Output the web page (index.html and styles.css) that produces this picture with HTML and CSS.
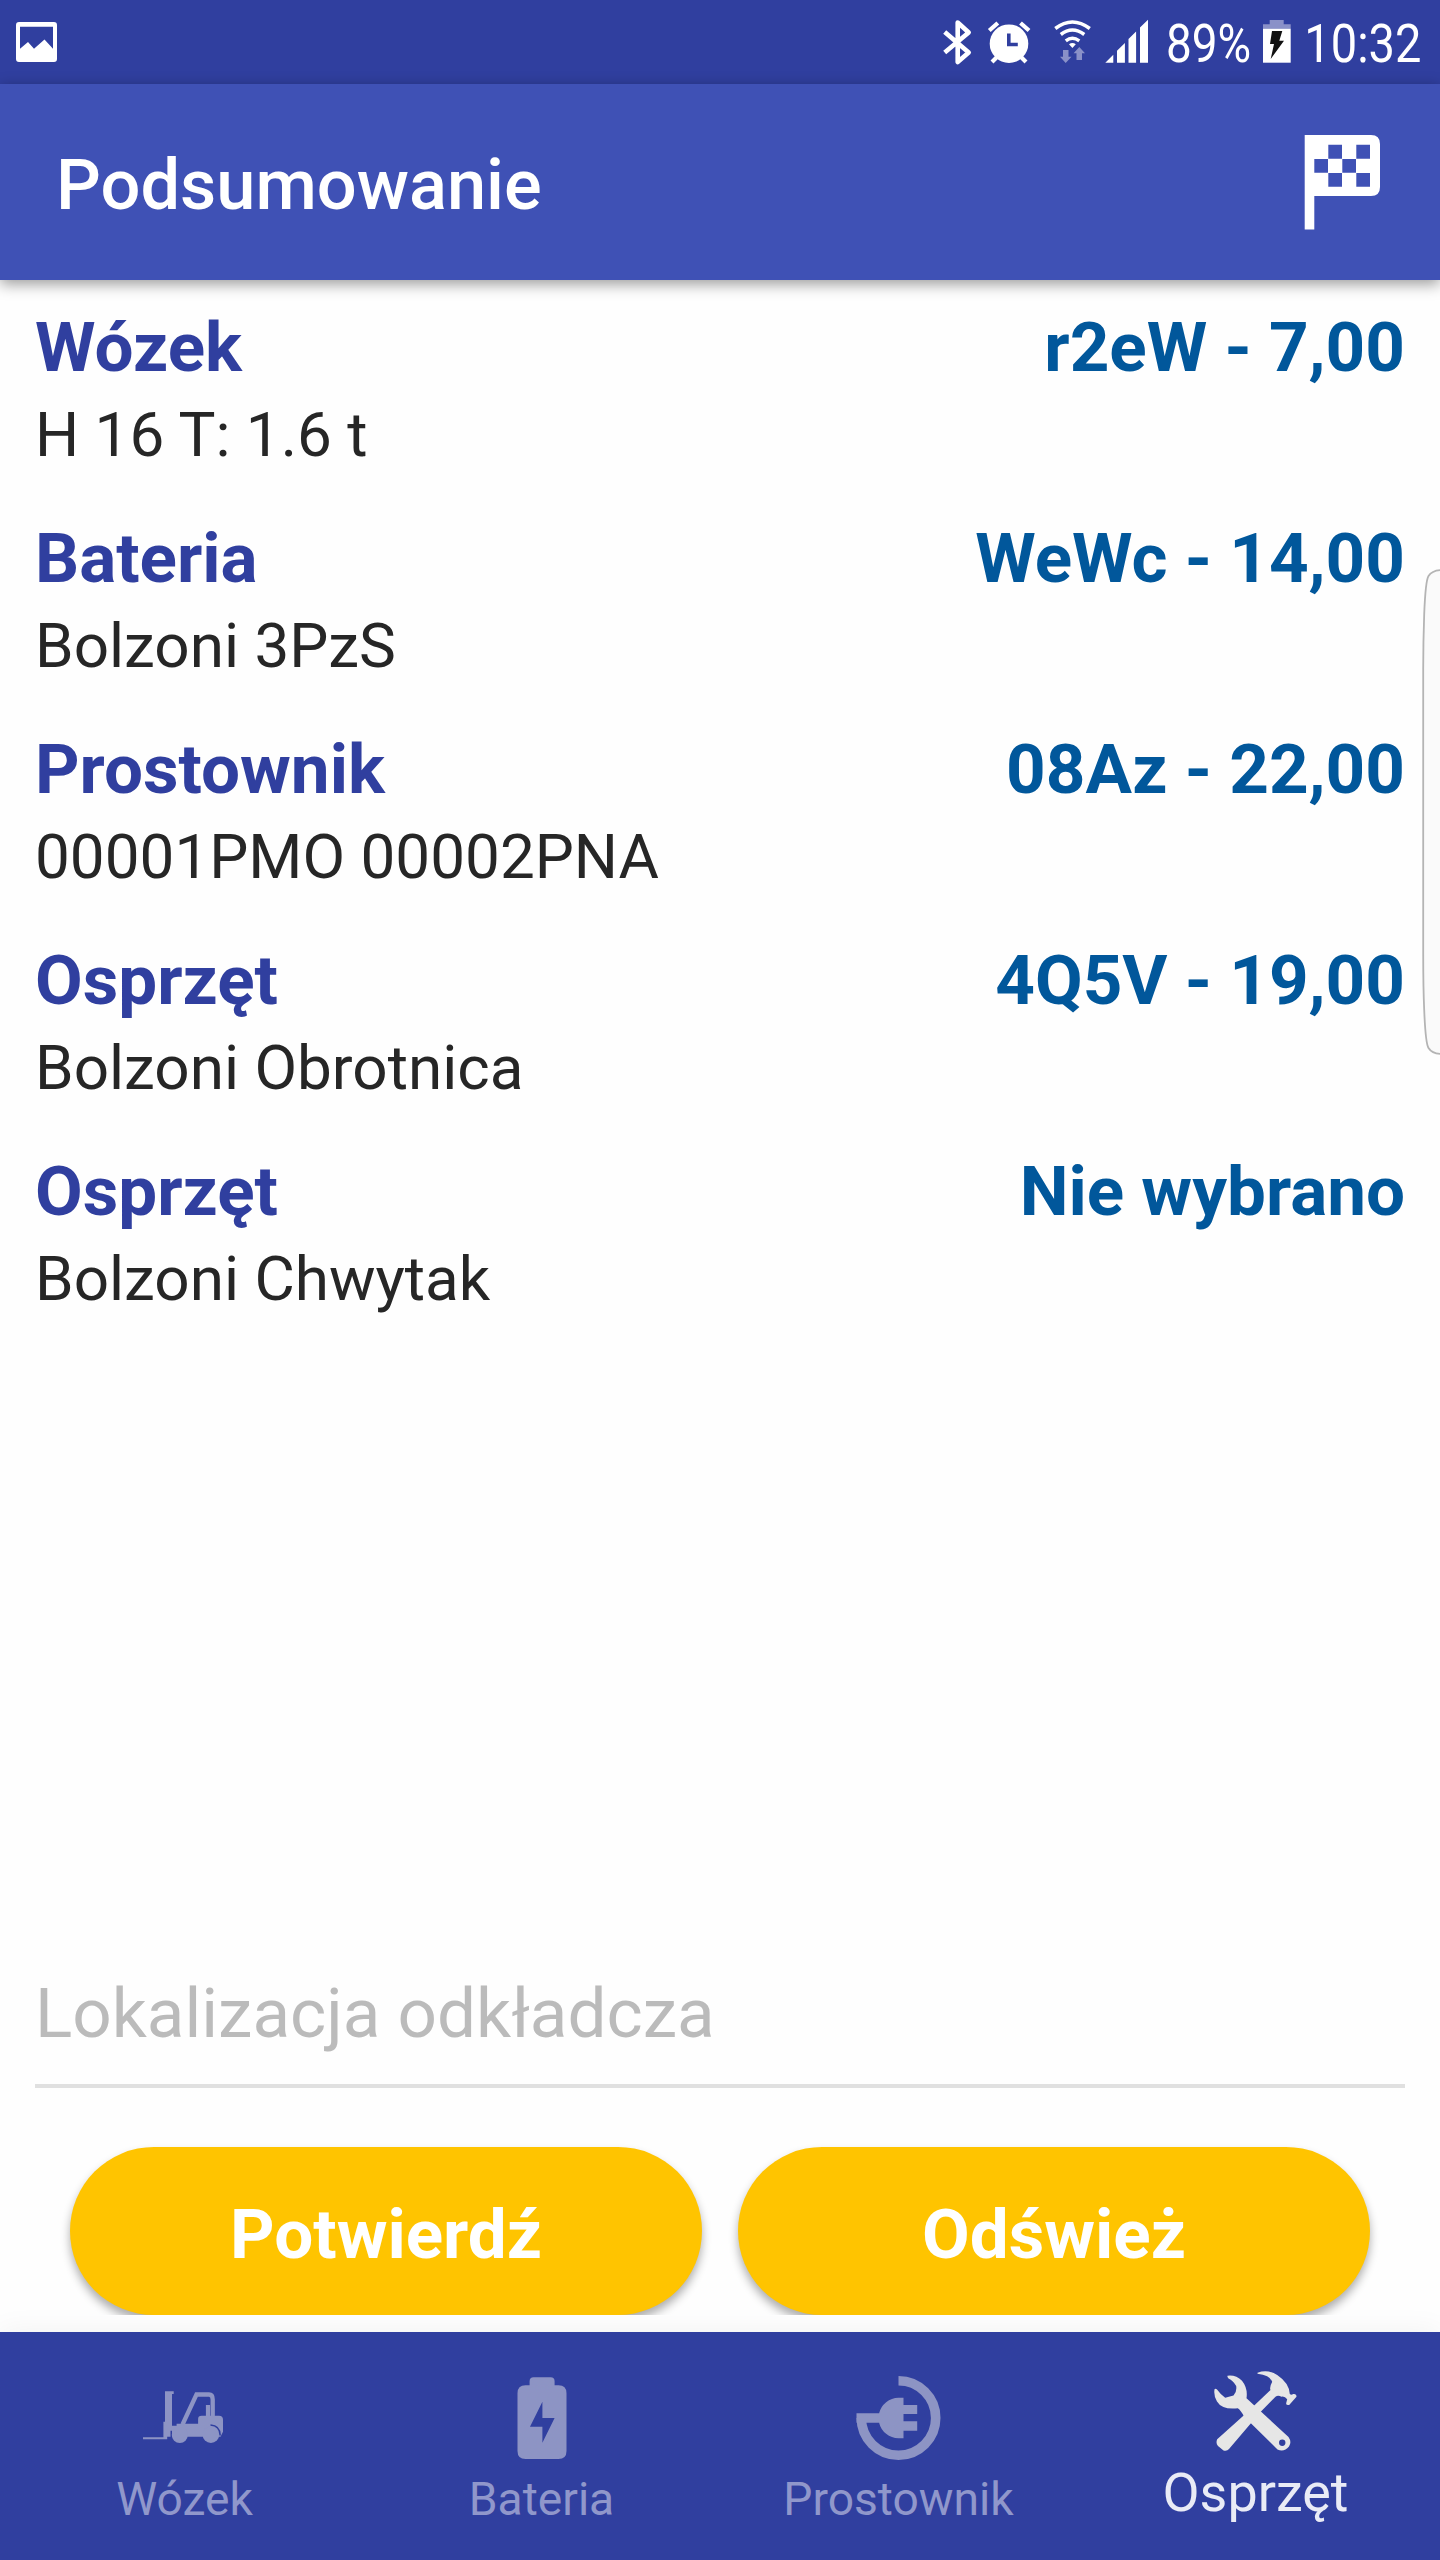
FILE: index.html
```html
<!DOCTYPE html>
<html lang="pl">
<head>
  <meta charset="UTF-8">
  <title>Podsumowanie</title>
  <link rel="stylesheet" href="styles.css">
</head>
<body>

<div class="status-bar">
  <svg class="status-photo" width="44" height="84" viewBox="0 0 44 84">
    <path fill="#fff" fill-rule="evenodd" d="M3 22h35q3 0 3 3v34q0 3-3 3H3q-3 0-3-3V25q0-3 3-3zM4 26.700v22l8-6.700 6 6.700 10.500-9.200 8.500 9.200v-22z"/>
  </svg>
  <div class="status-right">
    <!-- bluetooth -->
    <svg width="40" height="84" viewBox="0 0 40 84">
      <path fill="none" stroke="#fff" stroke-width="4.600" stroke-linejoin="round" d="M4.700 32l24 20.500L17.700 62V22.500l11 10L4.700 52.500"/>
    </svg>
    <!-- alarm -->
    <svg width="60" height="84" viewBox="0 0 60 84">
      <circle cx="29" cy="43.700" r="19.300" fill="#fff"/>
      <path fill="none" stroke="#fff" stroke-width="4.200" d="M9.300 30.500l8.500-7.500M40.500 23l8.500 7.500M12 62l6-6M46 62l-6-6"/>
      <path fill="none" stroke="#303f9f" stroke-width="3.600" d="M28.800 33.500v11h9"/>
    </svg>
    <!-- wifi -->
    <svg width="60" height="84" viewBox="0 0 60 84">
      <path fill="none" stroke="#fff" stroke-width="3.500" d="M15.300 28.500q17-13 34.500 0M20.800 34.500q11.500-9 23.500 0M25.800 40.800q6.500-5 13.500 0"/>
      <path fill="#fff" d="M29 44.200q3.300-2.600 6.800 0L32.400 48z"/>
      <path fill="#8a91c8" d="M23 50h5.500v6.700H31.500L25.700 63 20 56.700h3zM36.500 60H42v-6.700h3L39.300 47l-5.700 6.300h2.900z"/>
    </svg>
    <!-- signal -->
    <svg width="60" height="84" viewBox="0 0 60 84">
      <path fill="#fff" d="M5.300 62.700h8v-8zM17 62.700v-12l7.900-7.700v19.700zM28.500 62.700V39l7.600-7.500v31.200zM40 62.700V27.500l8-7.800v43z"/>
    </svg>
    <span class="status-text percent">89%</span>
    <!-- battery -->
    <svg width="44" height="84" viewBox="0 0 44 84">
      <path fill="#8a91c8" d="M13.700 20h14v4.300h7v4.500H7v-4.500h6.700z"/>
      <path fill="#fff" d="M7 28.700h27.700v34H7z"/>
      <path fill="#111" d="M16 31h10.300l-3 9.700H28L14.700 59 18 44h-4z"/>
    </svg>
    <span class="status-text time">10:32</span>
  </div>
</div>

<div class="app-bar">
  <h1>Podsumowanie</h1>
  <svg class="flag" width="76" height="95" viewBox="0 0 76 95">
    <path fill="#fff" fill-rule="evenodd" d="M.7 0H67q9 0 9 9v43q0 9-9 9H10.300v33.500H.7zM24.300 9.700v14H38v-14zM52.300 9.700v14H66v-14zM10.300 24v13.700H24V24zM38.300 24v13.700H52V24zM24.300 38v13.700H38V38zM52.300 38v13.700H66V38z"/>
  </svg>
</div>

<div class="content">
  <div class="item">
    <div class="item-top"><span class="name">Wózek</span><span class="code">r2eW - 7,00</span></div>
    <div class="desc">H 16 T: 1.6 t</div>
  </div>
  <div class="item">
    <div class="item-top"><span class="name">Bateria</span><span class="code">WeWc - 14,00</span></div>
    <div class="desc">Bolzoni 3PzS</div>
  </div>
  <div class="item">
    <div class="item-top"><span class="name">Prostownik</span><span class="code">08Az - 22,00</span></div>
    <div class="desc">00001PMO 00002PNA</div>
  </div>
  <div class="item">
    <div class="item-top"><span class="name">Osprzęt</span><span class="code">4Q5V - 19,00</span></div>
    <div class="desc">Bolzoni Obrotnica</div>
  </div>
  <div class="item">
    <div class="item-top"><span class="name">Osprzęt</span><span class="code">Nie wybrano</span></div>
    <div class="desc">Bolzoni Chwytak</div>
  </div>

  <div class="form">
    <input class="location" type="text" placeholder="Lokalizacja odkładcza">
    <div class="buttons">
      <button>Potwierdź</button>
      <button>Odśwież</button>
    </div>
  </div>
</div>

<!-- edge panel handle -->
<svg class="edge" width="18" height="486" viewBox="0 0 18 486">
  <path fill="#fafafa" stroke="#b4b4b4" stroke-width="1.800" d="M20 1C13 1 9 3 6.500 7 4 11 3 25 2.200 45 1.500 65 1.200 80 1.200 100v285c0 25 .3 40 1 56C3 461 4 475 6.500 479 9 483 13 485 20 485"/>
</svg>

<div class="nav">
  <div class="tab">
    <svg width="98" height="98" viewBox="0 0 98 98">
      <path fill="#8d94c4" d="M29 22.300h8.700V25H36v31.700h4.600v-2h21.500V50q0-3.300 3.500-3.300h4.300V36H74v10.700h9q4 0 4 4v12l-2.500 5H36v-6h-1.500v6h-3.300V70.300H7v-2h20.400V52.700H29z"/>
      <path fill="none" stroke="#8d94c4" stroke-width="4.300" d="M46.500 55.500l14-30H73q3.700 0 3.700 5V48"/>
      <circle cx="43.800" cy="66" r="8" fill="#8d94c4"/>
      <circle cx="74.900" cy="65.700" r="8.300" fill="#8d94c4"/>
      <path fill="none" stroke="#303f9f" stroke-width="1.500" d="M74.500 56q9.500.5 9.700 10.500"/>
    </svg>
    <span>Wózek</span>
  </div>
  <div class="tab">
    <svg width="98" height="98" viewBox="0 0 98 98">
      <path fill="#8d94c4" fill-rule="evenodd" d="M36.600 16.300v-4q0-4 4-4h17q4 0 4 4v4h3.900q8 0 8 8V82q0 8-8 8h-33q-8 0-8-8V24.300q0-8 8-8zM49.400 32.700L37 57.700h12.400v16L61.600 49H49.400z"/>
    </svg>
    <span>Bateria</span>
  </div>
  <div class="tab">
    <svg width="98" height="98" viewBox="0 0 98 98">
      <path fill="none" stroke="#8d94c4" stroke-width="9.600" d="M48.500 11.800A37.200 37.200 0 1 1 11.300 49"/>
      <path fill="#8d94c4" d="M6.500 44.200h22.600a20.300 20.300 0 0 1 19.400-15.500h5V36h13.700v9H53.500v7.300h13.700v9.400H53.500v7.600h-5a20.300 20.300 0 0 1-19.400-15.600H6.500z"/>
    </svg>
    <span>Prostownik</span>
  </div>
  <div class="tab active">
    <svg width="98" height="98" viewBox="0 0 98 98">
      <path fill="#e6e6e6" d="M50.500 10.700Q61 7 70.200 13q12 8 12.600 19 1.500 1.500 3.400 0 3.300-.5 3.300 2.700L82.200 43q-3.500.5-3-2l1-3.800q-2.500-3.200-5.700-2.500-3.500-2-6 0L53.500 50 22 87q-2 2.500-5.500 1.500L11 84q-2.500-3-.8-6.700l27.300-24.600L63.500 28q-1.300-2.500 1.700-8.300Q63 13 50.500 11.700z"/>
      <path fill="#e6e6e6" fill-rule="evenodd" d="M20.500 13.700q8.500-1 14.500 5 6 7.500 4.500 17.500L81.500 75q3.500 5 .5 9.500-5 6-11.500 3L37 54.500q-3-6-6.200-8.200Q15 48 10 39.500 6.500 34 7.500 27.300q1-1.300 2.500.2 4 5.500 8.200 8.300l8.300-2.300q3.500-3.500 2.700-9.500-3-5.500-7.700-7.500-1.500-1.500-1-2.800zM75.200 77.500a3.200 3.200 0 1 0 .1 6.400 3.200 3.200 0 1 0-.1-6.400z"/>
    </svg>
    <span>Osprzęt</span>
  </div>
</div>

</body>
</html>
```
FILE: styles.css
```css
* {
  box-sizing: border-box;
}
body {
  margin: 0;
  width: 1440px;
  height: 2560px;
  display: flex;
  flex-direction: column;
  overflow: hidden;
  position: relative;
  font-family: Roboto, "Liberation Sans", sans-serif;
  background-color: #fefefe;
}
svg {
  display: block;
  flex: none;
}

.status-bar {
  height: 84px;
  flex: none;
  display: flex;
  justify-content: space-between;
  padding-left: 16px;
  background-color: #303f9f;
}
.status-right {
  display: flex;
}
.status-text {
  color: #fff;
  font-size: 54px;
  line-height: 87px;
  white-space: nowrap;
  transform-origin: left;
}
.percent {
  width: 96px;
  padding-left: 7px;
  transform: scaleX(0.85);
}
.time {
  width: 140px;
  padding-left: 5px;
  transform: scaleX(0.87);
}

.app-bar {
  height: 196px;
  flex: none;
  display: flex;
  align-items: center;
  justify-content: space-between;
  padding: 4px 60px 0 56px;
  background-color: #3f51b5;
  box-shadow: 0 4px 14px rgba(0, 0, 0, 0.4);
  z-index: 1;
}
.app-bar h1 {
  margin: 2px 0 0;
  color: #fff;
  font-size: 70.4px;
  font-weight: 500;
  line-height: 82px;
}
.flag {
  margin-bottom: 3px;
}

.content {
  flex: 1;
  display: flex;
  flex-direction: column;
  padding: 27px 35px 0;
}
.item {
  height: 211px;
  flex: none;
}
.item-top {
  display: flex;
  justify-content: space-between;
  font-size: 69.2px;
  font-weight: 700;
  line-height: 82px;
}
.name {
  color: #303f9f;
}
.code {
  color: #01579b;
}
.desc {
  margin-top: 9px;
  color: #262626;
  font-size: 62px;
  line-height: 74px;
}

.form {
  margin-top: auto;
}
.location {
  display: block;
  width: 100%;
  height: 126px;
  padding: 0 0 19px;
  border: 0;
  border-bottom: 4px solid #e0e0e0;
  background: none;
  font-family: inherit;
  font-size: 69.2px;
}
.location::placeholder {
  color: #bbb;
  opacity: 1;
}
/* bottom edge cuts the button shadow */
.buttons {
  display: flex;
  gap: 36px;
  margin: 0 -35px 17px;
  padding: 59px 70px 0;
  overflow: hidden;
}
.buttons button {
  flex: 1;
  height: 168px;
  padding: 7px 0 0;
  border: 0;
  border-radius: 84px;
  background-color: #ffc400;
  box-shadow: 0 6px 10px rgba(0, 0, 0, 0.32);
  color: #fff;
  font-family: inherit;
  font-size: 69.2px;
  font-weight: 700;
}

.edge {
  position: absolute;
  right: 0;
  top: 569px;
}

.nav {
  height: 228px;
  flex: none;
  display: flex;
  padding: 0 6px;
  background-color: #303f9f;
  box-shadow: 0 0 28px rgba(0, 0, 0, 0.06);
}
.tab {
  flex: 1;
  display: flex;
  flex-direction: column;
  align-items: center;
  padding-top: 37px;
  color: #9097cb;
  font-size: 46.2px;
  line-height: 54px;
}
.tab span {
  margin-top: 5px;
}
.active {
  padding-top: 30px;
  color: #e9ebf6;
  font-size: 53.9px;
  line-height: 62px;
}
.active span {
  margin-top: 2px;
}
```
